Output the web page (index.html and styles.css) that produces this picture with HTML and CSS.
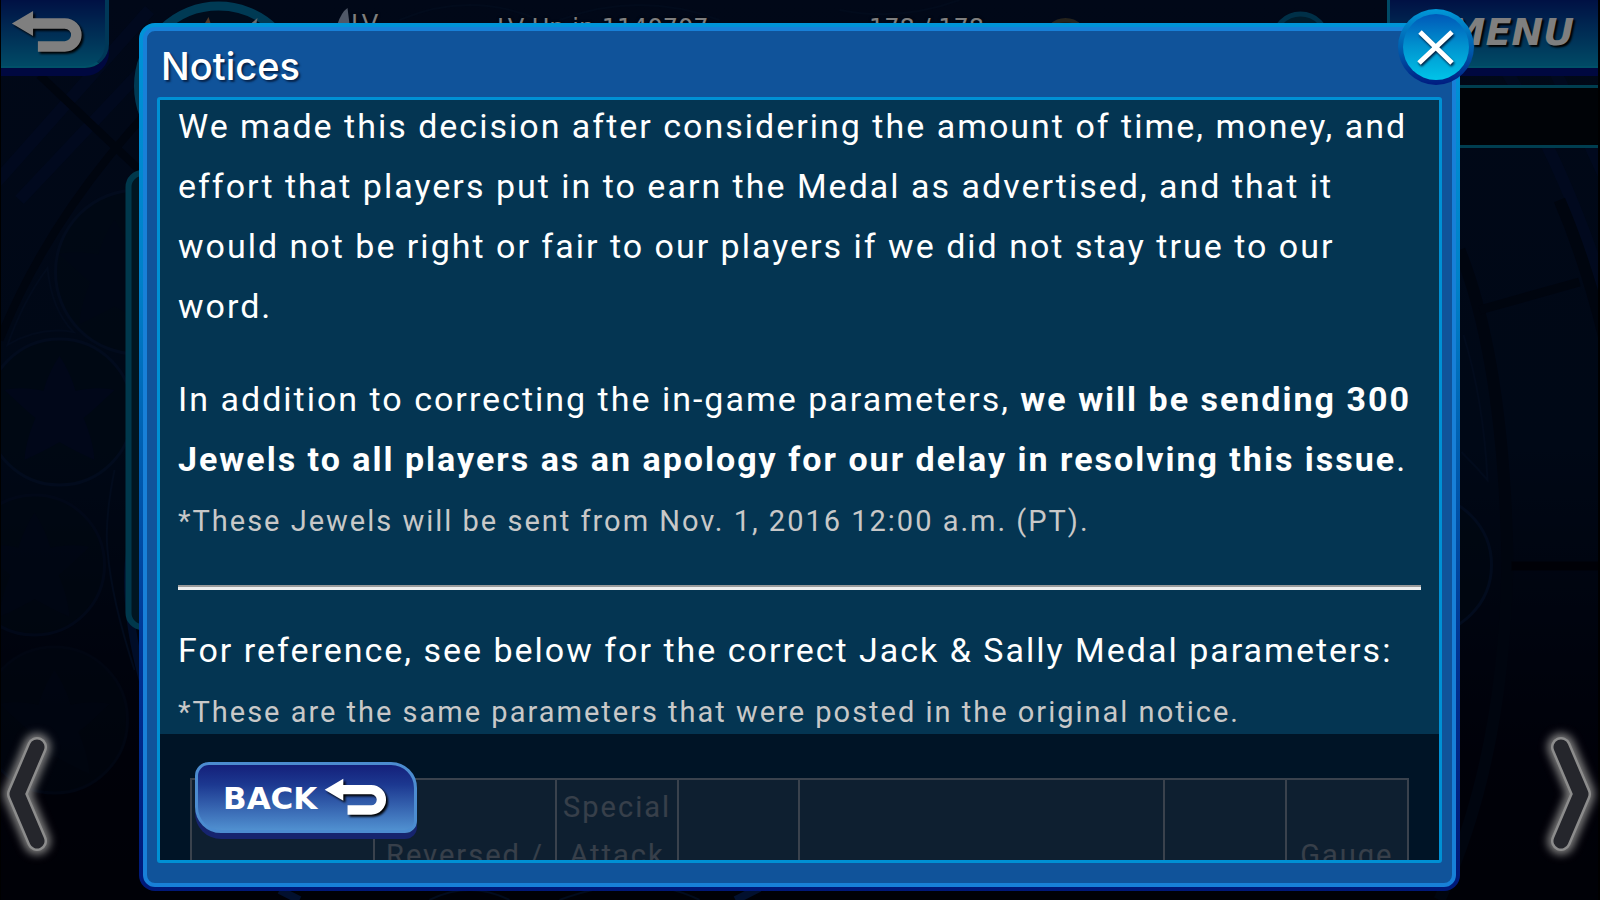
FILE: index.html
```html
<!DOCTYPE html>
<html lang="en">
<head>
  <meta charset="UTF-8">
  <meta name="viewport" content="width=device-width, initial-scale=1">
  <title>Notices</title>
  <link rel="stylesheet" href="styles.css">
</head>
<body>
  <!-- Game screen behind the dialog -->
  <div class="screen">
    <svg class="backdrop" viewBox="0 0 1600 900" preserveAspectRatio="xMidYMid slice" aria-hidden="true">
      <defs>
        <linearGradient id="night" x1="0" y1="0" x2="0" y2="1">
          <stop offset="0" stop-color="#021030"/>
          <stop offset="0.5" stop-color="#01102c"/>
          <stop offset="0.85" stop-color="#000212"/>
          <stop offset="1" stop-color="#00030e"/>
        </linearGradient>
        <path id="star" d="M0-52 C8-40 13-28 16-17 C32-21 46-20 55-18 C44-8 34 2 24 10 C30 24 34 38 35 52 C22 46 10 40 0 34 C-10 40-22 46-35 52 C-34 38-30 24-24 10 C-34 2-44-8-55-18 C-46-20-32-21-16-17 C-13-28-8-40 0-52Z"/>
      </defs>
      <rect width="1600" height="900" fill="url(#night)"/>
      <g fill="none" stroke="#04164a" stroke-opacity="0.5" stroke-width="12">
        <path d="M-10 190 L150 10 M20 200 L190 20"/>
        <path d="M1500 60 Q1590 200 1640 420 M1550 60 Q1600 160 1640 260"/>
      </g>
      <g fill="none" stroke="#000a1e" stroke-width="12">
        <path d="M0 340 Q60 190 200 60 M40 75 L140 170" stroke-width="8"/>
        <path d="M1460 250 Q1504 360 1508 560 Q1505 760 1440 900"/>
        <path d="M1480 310 L1580 282" stroke-width="9"/>
        <path d="M1512 566 H1600" stroke="#00030e" stroke-width="9"/>
        <path d="M1560 200 Q1590 270 1610 360"/>
      </g>
      <g fill="#001022" fill-opacity="0.5" stroke="#04173a" stroke-width="3">
        <circle cx="138" cy="272" r="82"/>
        <circle cx="60" cy="412" r="73"/>
        <circle cx="35" cy="565" r="70" stroke="#031130"/>
        <circle cx="55" cy="720" r="73" stroke="#020c24"/>
        <circle cx="1422" cy="565" r="70"/>
      </g>
      <g fill="none" stroke="#041638" stroke-width="2">
        <path d="M8 345 Q24 300 48 268 Q52 310 74 332 Q40 326 8 345Z"/>
        <path d="M115 470 Q105 520 108 550 Q112 600 135 670"/>
        <path d="M1464 335 Q1484 400 1488 480 Q1476 466 1462 452"/>
        <path d="M400 20 Q470 -10 540 20 M560 20 Q640 -10 720 20 M840 10 Q900 22 960 0"/>
        <path d="M430 900 Q470 880 510 900 M560 900 Q640 870 700 900"/>
      </g>
      <path d="M280 890 L300 900 M736 900 L760 888" stroke="#04205c" stroke-width="8"/>
      <g fill="#020e36">
        <use href="#star" x="60" y="408" opacity="0.8"/>
        <use href="#star" x="35" y="565" opacity="0.3"/>
        <use href="#star" x="115" y="272" opacity="0.3"/>
        <use href="#star" x="55" y="722" opacity="0.2"/>
      </g>
      <path d="M135 530 Q118 590 146 690" fill="none" stroke="#001a50" stroke-width="8"/>
      <rect x="129" y="173" width="60" height="454" rx="14" fill="#002c44" stroke="#007098" stroke-width="6"/>
      <!-- Player emblem and currency icons -->
      <circle cx="219" cy="86" r="80" fill="#001838" stroke="#0074a8" stroke-width="9"/>
      <path d="M205 24 L209 17 L212 26Z" fill="#a07050"/>
      <path d="M251 24 L258 18 L256 28Z" fill="#d0d8e0"/>
      <path d="M338 24 Q342 12 348 8 L350 24Z" fill="#a0b0d0"/>
      <circle cx="1066" cy="40" r="20" fill="#3a3428" stroke="#4c4638" stroke-width="4"/>
      <circle cx="1301" cy="41" r="27" fill="#003858" stroke="#006090" stroke-width="5"/>
    </svg>

    <header class="top-bar">
      <button class="corner-btn" type="button" aria-label="Back">
        <svg class="return-icon" viewBox="10 8 78 48">
          <path d="M12 23 L34 10 V36Z" fill="currentColor"/>
          <path d="M33 23 H67 A12 12 0 0 1 67 47 H39" fill="none" stroke="currentColor" stroke-width="11"/>
        </svg>
      </button>
      <div class="stats">
        <span class="stat-level">LV</span>
        <span class="stat-next">LV Up in 1140707</span>
        <span class="stat-ap">178 / 178</span>
      </div>
      <button class="menu-btn" type="button">MENU</button>
    </header>
    <div class="sub-bar"></div>
    <div class="dim"></div>
  </div>

  <button class="page-arrow page-prev" type="button" aria-label="Previous">
    <svg viewBox="0 0 56 140">
      <path class="glow" d="M37 23 L17 70 L37 117"/>
      <path class="edge" d="M37 23 L17 70 L37 117"/>
      <path class="core" d="M37 23 L17 70 L37 117"/>
    </svg>
  </button>
  <button class="page-arrow page-next" type="button" aria-label="Next">
    <svg viewBox="0 0 56 140">
      <path class="glow" d="M19 23 L39 70 L19 117"/>
      <path class="edge" d="M19 23 L39 70 L19 117"/>
      <path class="core" d="M19 23 L39 70 L19 117"/>
    </svg>
  </button>

  <!-- Notice dialog -->
  <main class="stage">
    <section class="dialog" role="dialog" aria-labelledby="dialogTitle">
      <div class="dialog-frame">
        <h1 class="dialog-title" id="dialogTitle">Notices</h1>
        <div class="notice">
          <div class="notice-body">
            <p>We made this decision after considering the amount of time, money, and effort that players put in to earn the Medal as advertised, and that it would not be right or fair to our players if we did not stay true to our word.</p>
            <p>In addition to correcting the in-game parameters, <strong>we will be sending 300 Jewels to all players as an apology for our delay in resolving this issue</strong>.<br>
            <small>*These Jewels will be sent from Nov. 1, 2016 12:00 a.m. (PT).</small></p>
            <hr>
            <p>For reference, see below for the correct Jack &amp; Sally Medal parameters:<br>
            <small>*These are the same parameters that were posted in the original notice.</small></p>
            <table class="params">
              <tr>
                <th class="w15"></th>
                <th class="w15">Reversed /</th>
                <th class="w10 top">Special Attack</th>
                <th class="w10"></th>
                <th class="w30"></th>
                <th class="w10"></th>
                <th class="w10">Gauge</th>
              </tr>
            </table>
          </div>
          <div class="notice-footer">
            <button class="back-btn" type="button">
              BACK
              <svg class="return-icon" viewBox="10 8 78 48" aria-hidden="true">
                <path d="M12 23 L34 10 V36Z" fill="currentColor"/>
                <path d="M33 23 H67 A12 12 0 0 1 67 47 H39" fill="none" stroke="currentColor" stroke-width="11"/>
              </svg>
            </button>
          </div>
        </div>
      </div>
      <button class="close-btn" type="button" aria-label="Close">
        <svg viewBox="0 0 40 40"><path d="M4 5 L36 36 M36 5 L3 36"/></svg>
      </button>
    </section>
  </main>
</body>
</html>
```
FILE: styles.css
```css
:root {
  --line: #0090d4;
  --rim: #1880d8;
  --panel: #10539a;
  --notice: #043552;
}
* {
  box-sizing: border-box;
}
body {
  margin: 0;
  height: 100vh;
  overflow: hidden;
  position: relative;
  background: #000;
  color: #fff;
  font-family: Roboto, "Liberation Sans", sans-serif;
}
button {
  margin: 0;
  padding: 0;
  border: none;
  background: none;
  color: #fff;
  cursor: pointer;
}
svg {
  display: block;
}

/* Game screen */
.screen {
  position: absolute;
  inset: 0 2px 0 1px;
  overflow: hidden;
}
.backdrop {
  position: absolute;
  inset: 0;
  width: 100%;
  height: 100%;
}
.top-bar {
  position: relative;
  display: flex;
  justify-content: space-between;
  align-items: flex-start;
}
.corner-btn,
.menu-btn {
  height: 68px;
  background: linear-gradient(#002288, #0094cc);
  border-bottom: 2px solid #00a0d0;
  box-shadow: 0 8px 0 #001080;
}
.corner-btn {
  width: 108px;
  padding: 0 20px 2px 9px;
  border-right: 4px solid #0070b0;
  border-radius: 0 0 24px 0;
  box-shadow: 0 8px 0 #001080;
}
.return-icon {
  width: 100%;
  filter: drop-shadow(2px 2px 1px #000);
}
.menu-btn {
  width: 211px;
  padding: 0 24px 2px 0;
  border-left: 3px solid #0094cc;
  text-align: right;
  font: italic bold 38px "DejaVu Sans", sans-serif;
  text-shadow: 2px 2px 2px #000;
}
.stats {
  flex: 1;
  display: flex;
  padding: 10px 0 0 242px;
  font: 24px/28px "DejaVu Sans", sans-serif;
  text-shadow: 0 0 3px #000;
  white-space: nowrap;
}
.stat-level {
  width: 146px;
}
.stat-next,
.stat-ap {
  padding-top: 4px;
}
.stat-next {
  width: 372px;
}
.sub-bar {
  position: relative;
  margin: 17px 0 0 50%;
  height: 63px;
  background: #00060e;
  border-top: 3px solid #007ca0;
  border-bottom: 3px solid #007ca0;
}
.dim {
  position: absolute;
  inset: 0;
  background: rgba(0, 0, 0, 0.5);
}

/* Page arrows */
.page-arrow {
  position: absolute;
  bottom: 36px;
  width: 56px;
  height: 140px;
}
.page-prev {
  left: 0;
}
.page-next {
  right: 2px;
}
.page-arrow svg {
  overflow: visible;
}
.page-arrow path {
  fill: none;
  stroke-linecap: round;
  stroke-linejoin: round;
}
.page-arrow .glow {
  stroke: #808080;
  stroke-width: 27;
  filter: blur(4px);
}
.page-arrow .edge {
  stroke: #8c8c8c;
  stroke-width: 20;
}
.page-arrow .core {
  stroke: #25262c;
  stroke-width: 15;
}

/* Dialog */
.stage {
  height: 100%;
  padding: 23px 140px 9px 139px;
}
.dialog {
  position: relative;
  height: 100%;
  padding: 4px;
  border-radius: 16px;
  background: linear-gradient(#0094d8, #0080c8 30%, #003090 75%, #001878);
}
.dialog-frame {
  display: flex;
  flex-direction: column;
  height: 100%;
  padding: 0 10px 20px;
  border: 4px solid var(--rim);
  border-radius: 12px;
  background: var(--panel);
}
.dialog-title {
  margin: 0;
  padding: 5px 4px 0;
  font: 500 38px/61px Inter, "Liberation Sans", sans-serif;
  text-shadow: 2px 2px 2px #06244c;
}
.notice {
  position: relative;
  flex: 1;
  min-height: 0;
  overflow: hidden;
  border: 3px solid var(--line);
  border-radius: 3px;
  background: var(--notice);
}
.notice-body {
  margin-top: -4px;
  padding: 0 18px;
  font-size: 34px;
  line-height: 60px;
  letter-spacing: 2px;
}
.notice-body p {
  margin: 0 0 33px;
}
.notice-body small {
  font-size: 29px;
  color: #c8c8c8;
}
.notice-body hr {
  height: 5px;
  margin: 34px 0 30px;
  border: none;
  border-top: 2px solid #9a9a9a;
  background: #eee;
}
.params {
  width: 98%;
  margin: 36px auto 0;
  border-collapse: collapse;
  table-layout: fixed;
  font-size: 29px;
  line-height: 48px;
}
.params th {
  height: 152px;
  padding: 3px 0;
  border: 2px solid #f0f0f0;
  background: rgba(255, 255, 255, 0.22);
  color: #e4e4e4;
  font-weight: 400;
}
.params .top {
  vertical-align: top;
}
.w10 {
  width: 10%;
}
.w15 {
  width: 15%;
}
.w30 {
  width: 30%;
}
.notice-footer {
  position: absolute;
  left: 0;
  right: 0;
  bottom: 0;
  height: 126px;
  padding: 28px 35px 0;
  background: rgba(0, 10, 25, 0.76);
}

/* Buttons on the dialog */
.back-btn {
  display: flex;
  align-items: center;
  gap: 6px;
  width: 222px;
  height: 71px;
  padding-left: 25px;
  border: 3px solid #4c8cd0;
  border-radius: 14px 26px 12px 26px;
  background: linear-gradient(#14207a, #1c3890 30%, #5090d0);
  box-shadow: 0 6px 0 #16246e;
  font: bold 31px "DejaVu Sans", sans-serif;
}
.back-btn .return-icon {
  width: 66px;
}
.close-btn {
  position: absolute;
  top: -14px;
  right: -14px;
  display: flex;
  align-items: center;
  justify-content: center;
  width: 76px;
  height: 76px;
  border: 5px solid transparent;
  border-radius: 50%;
  background: linear-gradient(#0058b8, #0094d0 50%, #00c4e8) padding-box, linear-gradient(#0098d8, #0060b0 50%, #001c80) border-box;
}
.close-btn svg {
  width: 40px;
  height: 40px;
  fill: none;
  stroke: #fff;
  stroke-width: 5;
  filter: drop-shadow(1px 2px 1px #024);
}
```
